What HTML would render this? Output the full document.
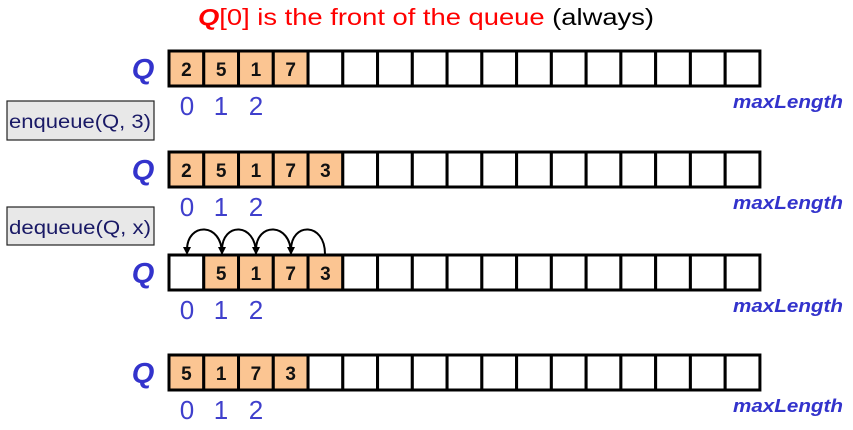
<!DOCTYPE html>
<html><head><meta charset="utf-8"><style>
html,body{margin:0;padding:0;background:#fff;width:853px;height:430px;overflow:hidden}
svg{display:block}
</style></head><body>
<svg width="853" height="430" xmlns="http://www.w3.org/2000/svg" font-family="Liberation Sans, sans-serif">
<text x="426" y="25" text-anchor="middle" font-size="23" fill="#ff0000" textLength="456" lengthAdjust="spacingAndGlyphs"><tspan font-weight="bold" font-style="italic">Q</tspan>[0] is the front of the queue <tspan fill="#000">(always)</tspan></text>
<g id="rows"></g>
<rect x="7" y="101" width="147" height="39" fill="#e8e8e8" stroke="#222" stroke-width="1.2"/>
<text x="80" y="128" text-anchor="middle" font-size="19" fill="#1a1a66" textLength="142" lengthAdjust="spacingAndGlyphs">enqueue(Q, 3)</text>
<rect x="7" y="207" width="147" height="38" fill="#e8e8e8" stroke="#222" stroke-width="1.2"/>
<text x="80" y="234" text-anchor="middle" font-size="19" fill="#1a1a66" textLength="142" lengthAdjust="spacingAndGlyphs">dequeue(Q, x)</text>
<g fill="none" stroke="#000" stroke-width="2">
<path d="M222 254 C222 222 187 222 187 250"/>
<path d="M256 254 C256 222 222 222 222 250"/>
<path d="M291 254 C291 222 256 222 256 250"/>
<path d="M325 254 C325 222 291 222 291 250"/>
</g>
<g fill="#000">
<path d="M183 247 L191 247 L187 255Z"/>
<path d="M218 247 L226 247 L222 255Z"/>
<path d="M252 247 L260 247 L256 255Z"/>
<path d="M287 247 L295 247 L291 255Z"/>
</g>
</svg>
<script>
const g=document.getElementById('rows');
const rows=[[51,['2','5','1','7']],[152,['2','5','1','7','3']],[255,['','5','1','7','3']],[355,['5','1','7','3']]];
const X0=169,W=34.76,H=35;
let s='';
for(const [y,vals] of rows){
 for(let i=0;i<17;i++){
  const v=vals[i];
  const fill=(v!==undefined&&v!=='')?'#fbc592':'#fff';
  s+=`<rect x="${X0+i*W}" y="${y}" width="${W}" height="${H}" fill="${fill}" stroke="#000" stroke-width="3"/>`;
  if(v) s+=`<text x="${X0+i*W+W/2}" y="${y+25}" text-anchor="middle" font-size="19" font-weight="bold" fill="#111">${v}</text>`;
 }
 s+=`<text x="143" y="${y+28}" text-anchor="middle" font-size="29" font-weight="bold" font-style="italic" fill="#3333cc">Q</text>`;
 s+=`<text x="187" y="${y+64}" text-anchor="middle" font-size="26" fill="#3f3fcc">0</text>`;
 s+=`<text x="221" y="${y+64}" text-anchor="middle" font-size="26" fill="#3f3fcc">1</text>`;
 s+=`<text x="256" y="${y+64}" text-anchor="middle" font-size="26" fill="#3f3fcc">2</text>`;
 s+=`<text x="843" y="${y+57}" text-anchor="end" font-size="18" font-weight="bold" font-style="italic" fill="#3333cc" textLength="110" lengthAdjust="spacingAndGlyphs">maxLength</text>`;
}
g.innerHTML=s;
</script>
</body></html>
